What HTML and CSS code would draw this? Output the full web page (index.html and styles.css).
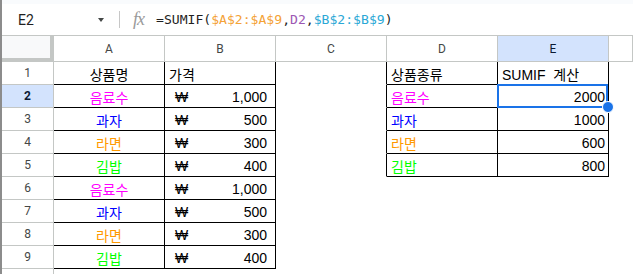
FILE: index.html
```html
<!DOCTYPE html>
<html>
    <head>
        <meta charset="UTF-8">
        <title>SUMIF</title>
        <link rel="stylesheet" href="styles.css">
    </head>
    <body>
        <div class="app">
            <div class="top-strip"></div>
            <div class="formula-bar">
                <div class="name-box"><span>E2</span><span class="caret"></span></div>
                <div class="divider"></div>
                <span class="fx">fx</span>
                <span class="formula">=SUMIF(<span class="ref-a">$A$2:$A$9</span>,<span class="ref-d">D2</span>,<span class="ref-b">$B$2:$B$9</span>)</span>
            </div>
            <div class="sheet">
                <!-- column headers -->
                <div class="corner"></div>
                <div class="col-head">A</div>
                <div class="col-head">B</div>
                <div class="col-head">C</div>
                <div class="col-head">D</div>
                <div class="col-head picked">E</div>
                <div class="col-head"></div>

                <!-- row 1 -->
                <div class="row-head">1</div>
                <div class="cell line center">상품명</div>
                <div class="cell line">가격</div>
                <div class="cell edge"></div>
                <div class="cell line">상품종류</div>
                <div class="cell line">SUMIF&nbsp; 계산</div>
                <div class="cell"></div>

                <!-- row 2 -->
                <div class="row-head picked">2</div>
                <div class="cell line center pink">음료수</div>
                <div class="cell line won"><span>₩</span><span>1,000</span></div>
                <div class="cell edge"></div>
                <div class="cell line pink">음료수</div>
                <div class="cell line right active">2000</div>
                <div class="cell"></div>

                <!-- row 3 -->
                <div class="row-head">3</div>
                <div class="cell line center blue">과자</div>
                <div class="cell line won"><span>₩</span><span>500</span></div>
                <div class="cell edge"></div>
                <div class="cell line blue">과자</div>
                <div class="cell line right">1000</div>
                <div class="cell"></div>

                <!-- row 4 -->
                <div class="row-head">4</div>
                <div class="cell line center orange">라면</div>
                <div class="cell line won"><span>₩</span><span>300</span></div>
                <div class="cell edge"></div>
                <div class="cell line orange">라면</div>
                <div class="cell line right">600</div>
                <div class="cell"></div>

                <!-- row 5 -->
                <div class="row-head">5</div>
                <div class="cell line center green">김밥</div>
                <div class="cell line won"><span>₩</span><span>400</span></div>
                <div class="cell edge"></div>
                <div class="cell line green">김밥</div>
                <div class="cell line right">800</div>
                <div class="cell"></div>

                <!-- row 6 -->
                <div class="row-head">6</div>
                <div class="cell line center pink">음료수</div>
                <div class="cell line won"><span>₩</span><span>1,000</span></div>
                <div class="cell"></div>
                <div class="cell"></div>
                <div class="cell"></div>
                <div class="cell"></div>

                <!-- row 7 -->
                <div class="row-head">7</div>
                <div class="cell line center blue">과자</div>
                <div class="cell line won"><span>₩</span><span>500</span></div>
                <div class="cell"></div>
                <div class="cell"></div>
                <div class="cell"></div>
                <div class="cell"></div>

                <!-- row 8 -->
                <div class="row-head">8</div>
                <div class="cell line center orange">라면</div>
                <div class="cell line won"><span>₩</span><span>300</span></div>
                <div class="cell"></div>
                <div class="cell"></div>
                <div class="cell"></div>
                <div class="cell"></div>

                <!-- row 9 -->
                <div class="row-head">9</div>
                <div class="cell line center green">김밥</div>
                <div class="cell line won"><span>₩</span><span>400</span></div>
                <div class="cell"></div>
                <div class="cell"></div>
                <div class="cell"></div>
                <div class="cell"></div>

                <!-- row 10, only its top edge shows -->
                <div class="row-head"></div>
                <div class="cell"></div>
                <div class="cell"></div>
                <div class="cell"></div>
                <div class="cell"></div>
                <div class="cell"></div>
                <div class="cell"></div>
            </div>
        </div>
    </body>
</html>
```

FILE: styles.css
```css
* {
    box-sizing: border-box;
}
body {
    margin: 0;
    padding: 0;
    height: 274px;
    overflow: hidden;
    background: #fff;
    font-family: "Liberation Sans", "Noto Sans CJK KR", sans-serif;
    color: #000;
}
.app {
    border-left: 2px solid #8c8c8c;
    height: 274px;
}
.top-strip {
    height: 4px;
    background: #f9fbfd;
}
.formula-bar {
    height: 32px;
    border-bottom: 1px solid #c4c7c5;
    display: flex;
    align-items: center;
}
.name-box {
    width: 117px;
    padding-left: 16px;
    padding-right: 15px;
    display: flex;
    align-items: center;
    justify-content: space-between;
    font-family: Roboto, "Liberation Sans", sans-serif;
    font-size: 14px;
    color: #1f1f1f;
}
.caret {
    width: 0;
    height: 0;
    border-left: 3px solid transparent;
    border-right: 3px solid transparent;
    border-top: 4px solid #444746;
}
.divider {
    width: 1px;
    height: 17px;
    background: #c7c7c7;
}
.fx {
    margin-left: 13px;
    font-family: "Liberation Serif", serif;
    font-style: italic;
    font-size: 18px;
    color: #9a9a9a;
    letter-spacing: -1px;
}
.formula {
    margin-left: 12px;
    font-family: "DejaVu Sans Mono", monospace;
    font-size: 13.1px;
    color: #1f1f1f;
}
.ref-a {
    color: #f4a236;
}
.ref-d {
    color: #9c57b3;
}
.ref-b {
    color: #2ba8d6;
}
.sheet {
    display: grid;
    grid-template-columns: 52px repeat(5, 111px) 1fr;
    grid-template-rows: 26px;
    grid-auto-rows: 23px;
}
.corner {
    background: #f8f9fa;
    border-right: 4px solid #c4c7c5;
    border-bottom: 4px solid #c4c7c5;
}
.col-head,
.row-head {
    border-right: 1px solid #c4c7c5;
    border-bottom: 1px solid #c4c7c5;
    display: flex;
    align-items: center;
    justify-content: center;
    font-family: Roboto, "Liberation Sans", sans-serif;
    font-size: 12px;
    color: #444746;
}
.col-head.picked,
.row-head.picked {
    background: #d3e3fd;
    color: #0b1a33;
}
.row-head.picked {
    font-weight: bold;
}
.cell {
    position: relative;
    border-right: 1px solid transparent;
    border-bottom: 1px solid transparent;
    display: flex;
    align-items: center;
    padding: 1px 4px 0 4px;
    font-size: 14px;
    white-space: nowrap;
}
.cell.line {
    border-right-color: #000;
    border-bottom-color: #000;
}
.cell.edge {
    border-right-color: #000;
}
.cell.center {
    justify-content: center;
}
.cell.right {
    justify-content: flex-end;
    padding-right: 3px;
}
.cell.won {
    justify-content: space-between;
    padding-left: 10px;
    padding-right: 8px;
}
.pink {
    color: #ff00ff;
}
.blue {
    color: #0000ff;
}
.orange {
    color: #ff9900;
}
.green {
    color: #00ff00;
}
.cell.active::after {
    content: "";
    position: absolute;
    top: -1px;
    left: -1px;
    right: 0;
    bottom: -1px;
    border: 2px solid #1a73e8;
}
.cell.active::before {
    content: "";
    position: absolute;
    right: -6px;
    bottom: -6px;
    width: 10px;
    height: 10px;
    border-radius: 50%;
    background: #1a73e8;
    border: 1px solid #fff;
    z-index: 2;
}
```
